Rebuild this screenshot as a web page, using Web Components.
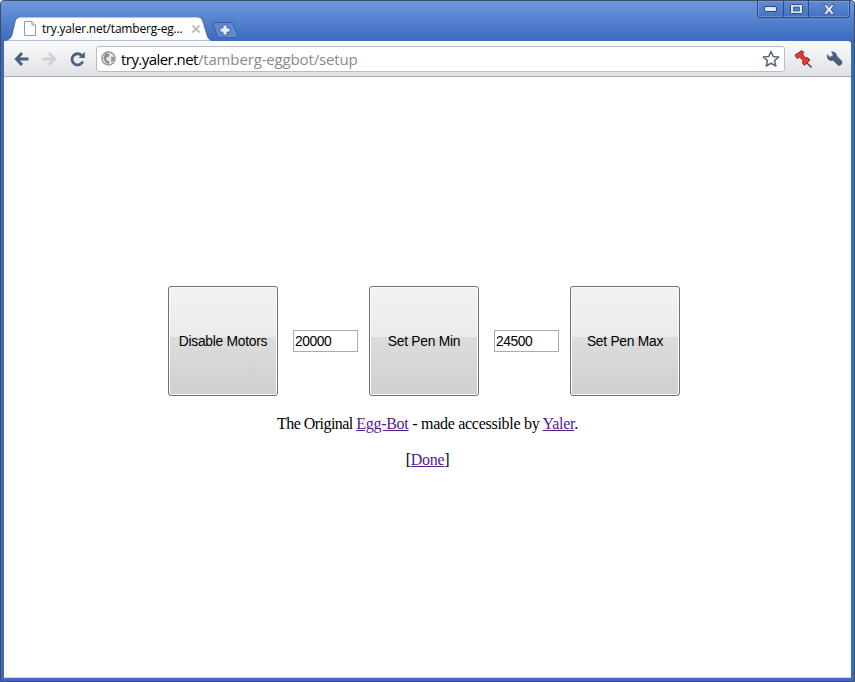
<!DOCTYPE html>
<html><head><meta charset="utf-8"><style>
html,body{margin:0;padding:0;height:100%;background:#fff}
body{width:855px;height:682px;overflow:hidden}
</style></head><body>
<browser-window>
  <egg-page>
    <panel-button>Disable Motors</panel-button>
    <num-field value="20000"></num-field>
    <panel-button>Set Pen Min</panel-button>
    <num-field value="24500"></num-field>
    <panel-button>Set Pen Max</panel-button>
  </egg-page>
</browser-window>
<script>
class BrowserWindow extends HTMLElement{constructor(){super();this.attachShadow({mode:'open'}).innerHTML=`<style>
:host{display:flex;flex-direction:column;width:855px;height:682px;box-sizing:border-box;background:#3a6bbd;border:1px solid #3d4d66;border-radius:4px 4px 0 0;overflow:hidden;position:relative}
.top{height:40px;flex:none;background:linear-gradient(#6f97da,#5583cf 18px,#3c6cc0);position:relative;display:flex;align-items:flex-end;padding-left:3px}
.tab{width:210px;height:24px;position:relative;flex:none;box-sizing:border-box;display:flex;align-items:center;padding:0 0 1px 20px}
.tab svg.bg{position:absolute;left:0;top:0}
.tab>*:not(.bg){position:relative}
.title{font:12px/16px "Open Sans","Noto Sans",sans-serif;color:#000;white-space:nowrap;width:140px;margin-left:6px;letter-spacing:-.2px}
.x{margin-left:10px}
.newtab{position:absolute;left:211px;top:21px}
.ctl{position:absolute;right:4px;top:0;height:17px;width:93px;display:flex;background:linear-gradient(#5f8ad4,#4473c4);border:1px solid #2c4a7e;border-top:none;border-radius:0 0 4px 4px;box-sizing:border-box;box-shadow:inset 0 0 0 .5px #8fb0e2}
.ctl span{display:flex;align-items:center;justify-content:center;border-right:1px solid #2c4a7e}
.ctl span:nth-child(1){width:25px}.ctl span:nth-child(2){width:24px}.ctl span:nth-child(3){flex:1;border:none}
.bar{height:36px;flex:none;margin:0 3px;background:linear-gradient(#fafbfc,#dfe1e4);border-bottom:1px solid #a9abae;display:flex;align-items:center;box-sizing:border-box;padding-left:10px;border-radius:0 3px 0 0}
.nav{display:flex;gap:13px;align-items:center}
.nav svg{display:block}
.omni{margin-left:11px;width:689px;height:26px;box-sizing:border-box;background:#fff;border:1px solid #b9bcc1;border-radius:3px;display:flex;align-items:center;padding:0 4px 0 4px;gap:5px;flex:none}
.url{font:15px/20px "Open Sans","Noto Sans",sans-serif;color:#000;flex:1;white-space:nowrap;letter-spacing:-.55px}
.url span{color:#8a8a8a;letter-spacing:-.15px}
.tools{display:flex;gap:13px;margin-left:9px;align-items:center}
.tools svg{display:block}
.content{flex:1;margin:0 3px 3px;background:#fff;min-height:0;display:flex;flex-direction:column;border-bottom:1px solid #d8d8d8}
</style>
<div class="top">
<div class="tab">
<svg class="bg" width="210" height="24" viewBox="0 0 210 24"><path d="M0 24C5 23 7 21 8 18L11 5C12 1 14 0 18 0H192C196 0 198 1 199 5L203 18C204 22 206 23.500 210 24Z" fill="url(#g)" stroke="#2f5596" stroke-width=".7"/><defs><linearGradient id="g" x1="0" y1="0" x2="0" y2="1"><stop offset="0" stop-color="#fff"/><stop offset="1" stop-color="#fafbfc"/></linearGradient></defs></svg>
<svg width="12" height="15" viewBox="0 0 12 15"><path d="M.5 .5H8L11.500 4V14.500H.5Z" fill="#fff" stroke="#9a9a9a"/><path d="M8 .5V4H11.500" fill="#eee" stroke="#9a9a9a"/></svg>
<span class="title">try.yaler.net/tamberg-eg...</span>
<svg class="x" width="8" height="8" viewBox="0 0 8 8"><path d="M.5 .5L7.500 7.500M7.500 .5L.5 7.500" stroke="#b5b5b5" stroke-width="1.600"/></svg>
</div>
<svg class="newtab" width="27" height="16" viewBox="0 0 27 16"><path d="M1 .5H18C20 .5 20.500 1 21 2.500L25.500 12.500C26 14 25 15.500 23 15.500H8C6.500 15.500 5.500 15 5 13.500L.8 1.500Z" fill="#5f88d0" stroke="#3a5f9f"/><path d="M11 3H15V6H18V10H15V13H11V10H8V6H11Z" fill="#e6edf8" stroke="#3f5f98" stroke-width=".8"/></svg>
<div class="ctl">
<span><svg width="13" height="6" viewBox="0 0 13 6"><rect x=".5" y=".5" width="12" height="5" rx="1.500" fill="#dfe8f6" stroke="#2f4a78"/></svg></span>
<span><svg width="13" height="10" viewBox="0 0 13 10"><rect x=".5" y=".5" width="12" height="9" rx="1" fill="#dfe8f6" stroke="#2f4a78"/><rect x="3.500" y="3" width="6" height="4" fill="#4f7fcb" stroke="#2f4a78" stroke-width=".7"/></svg></span>
<span><svg width="14" height="11" viewBox="0 0 14 11"><path d="M1.500 .5H4.500L7 3.500L9.500 .5H12.500L9 5.500L12.500 10.500H9.500L7 7.500L4.500 10.500H1.500L5 5.500Z" fill="#e6edf8" stroke="#2f4a78" stroke-width=".8"/></svg></span>
</div>
</div>
<div class="bar">
<div class="nav">
<svg width="15" height="16" viewBox="0 0 15 16"><path d="M8 2L2.500 8L8 14M3 8H14.500" fill="none" stroke="#4b5f7f" stroke-width="3"/></svg>
<svg width="15" height="16" viewBox="0 0 15 16"><path d="M7 2L12.500 8L7 14M12 8H.5" fill="none" stroke="#cdd1d8" stroke-width="3"/></svg>
<svg width="15" height="16" viewBox="0 0 15 16"><path d="M12.800 10.500A5.600 5.600 0 1 1 11.500 4.300" fill="none" stroke="#4b5f7f" stroke-width="2.800"/><path d="M8.500 7H14.800V.8Z" fill="#4b5f7f"/></svg>
</div>
<div class="omni">
<svg width="15" height="15" viewBox="0 0 16 16"><circle cx="8" cy="8" r="7" fill="#e8e8e8" stroke="#8e8e8e" stroke-width="1.400"/><path d="M4.500 2.500L9 3L8.500 6L5.500 7L6 10L9 11L8 14.500L5 12.500L2.500 8Z M11 5.500L14 7L13.500 10.500L11 12Z" fill="#8e8e8e"/></svg>
<div class="url">try.yaler.net<span>/tamberg-eggbot/setup</span></div>
<svg width="18" height="18" viewBox="0 0 18 18"><path d="M9 1.500L11.200 6.500L16.700 7L12.500 10.600L13.800 16L9 13.200L4.200 16L5.500 10.600L1.300 7L6.800 6.500Z" fill="#fff" stroke="#5d6b80" stroke-width="1.600" stroke-linejoin="round"/></svg>
</div>
<div class="tools">
<svg width="18" height="18" viewBox="0 0 18 18"><path d="M12 12L17.500 17.500" stroke="#555" stroke-width="1.600"/><path d="M1 5L8 0.500L10 2.500L8.500 4L11 8L13.500 7.500L16 10L10.500 15.500L8.500 13L9 10.500L5.500 7L3 8.500Z" fill="#e23a36" stroke="#a5201d"/></svg>
<svg width="18" height="18" viewBox="0 0 18 18"><path d="M2 4L5 7L8 5L6 1.500C9 1 12 3 12 6L17 11C18.500 13 15 17 13 15.500L8 10.500C5 12 1 9 2 4Z" fill="#4b5f7f"/></svg>
</div>
</div>
<div class="content"><slot></slot></div>`}}
customElements.define('browser-window',BrowserWindow);
class EggPage extends HTMLElement{constructor(){super();this.attachShadow({mode:'open'}).innerHTML=`<style>
:host{display:flex;flex-direction:column;align-items:center;padding-top:209px;font:16px/18px "Liberation Serif",serif;color:#000;letter-spacing:-.28px}
.row{display:flex;align-items:center;margin-left:-7px;letter-spacing:0}
p{margin:0;text-align:center;white-space:nowrap}
.a{margin-top:19px}.b{margin-top:18px}
.lead{letter-spacing:-.54px}
a{color:#551a8b;text-decoration:underline}
</style><div class="row"><slot></slot></div>
<p class="a"><span class="lead">The Original </span><a href="#">Egg-Bot</a> - made accessible by <a href="#">Yaler</a>.</p>
<p class="b">[<a href="#">Done</a>]</p>`}}
customElements.define('egg-page',EggPage);
class PanelButton extends HTMLElement{constructor(){super();this.attachShadow({mode:'open'}).innerHTML=`<style>
:host{display:flex;flex:none;width:110px;height:110px;box-sizing:border-box;border:1px solid #707070;border-radius:3px;align-items:center;justify-content:center;font:13.8px/16px "Liberation Sans",sans-serif;letter-spacing:-.25px;color:#000;background:linear-gradient(#f2f2f2,#ebebeb 46%,#dddddd 46%,#cfcfcf);box-shadow:inset 0 0 0 1px #fcfcfc;padding-top:1px}
</style><slot></slot>`}}
customElements.define('panel-button',PanelButton);
class NumField extends HTMLElement{constructor(){super();this.attachShadow({mode:'open'}).innerHTML=`<style>
:host{display:block;flex:none;width:65px;height:22px;margin:0 11px 0 15px;box-sizing:border-box;border:1px solid #ababab;background:#fff;font:13.8px/21px "Liberation Sans",sans-serif;letter-spacing:-.4px;color:#000;padding-left:1px}
</style><span></span>`;this.shadowRoot.querySelector('span').textContent=this.getAttribute('value')}}
customElements.define('num-field',NumField);
</script></body></html>
